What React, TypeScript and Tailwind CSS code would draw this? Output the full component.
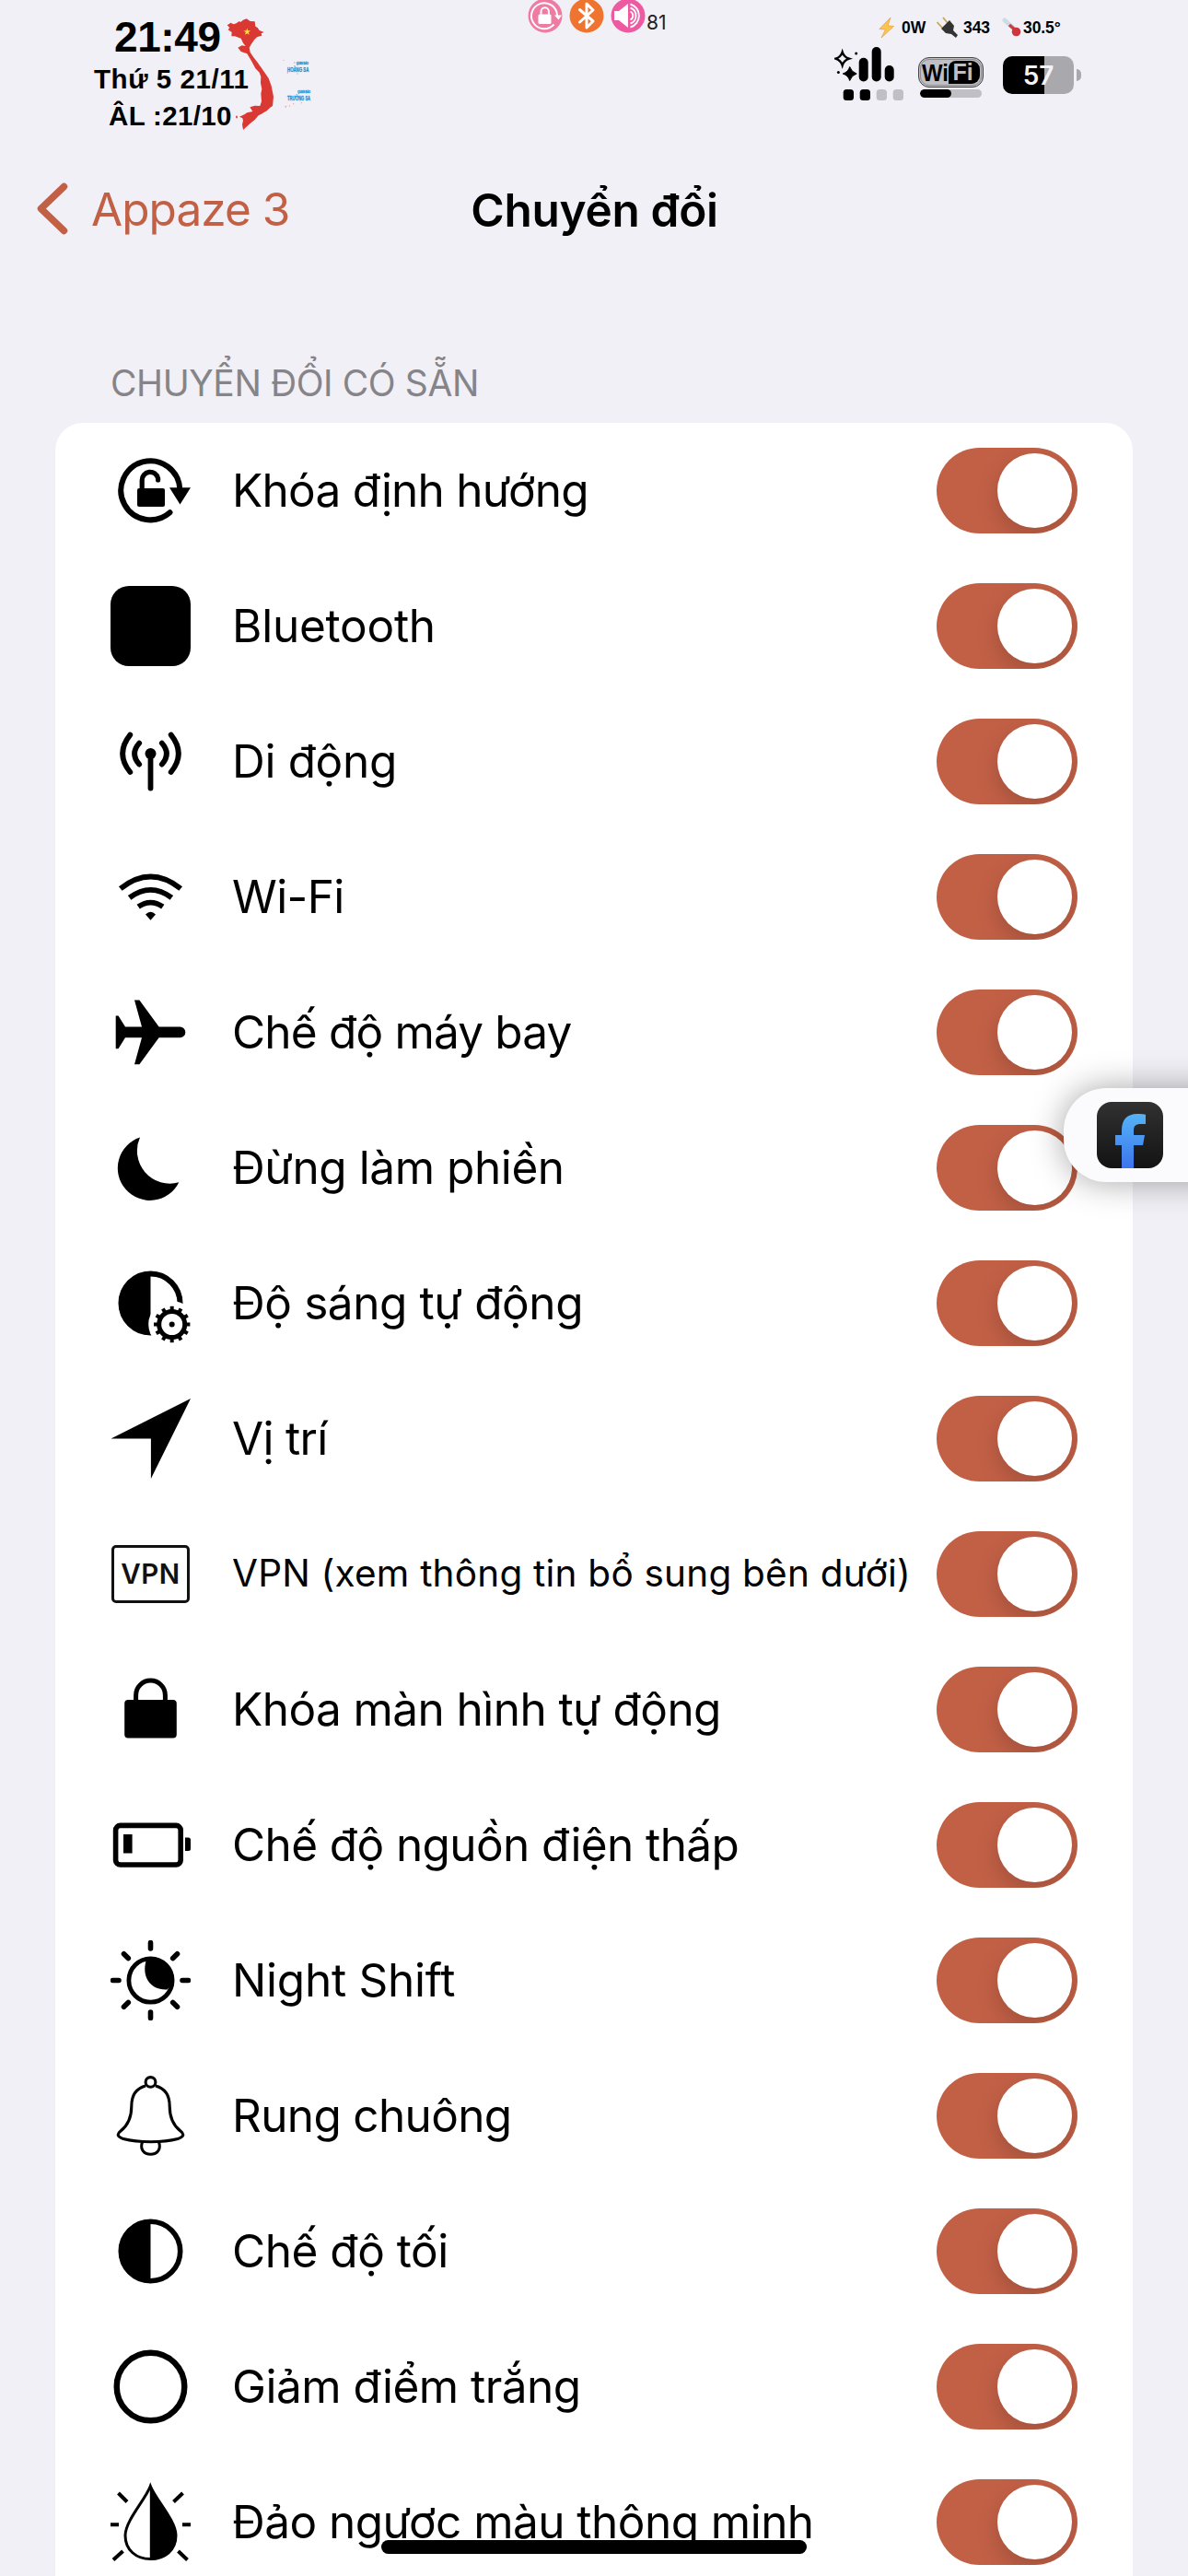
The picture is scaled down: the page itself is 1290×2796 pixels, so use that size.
import type { ReactNode } from 'react';

function Glyph({ children }: { children: ReactNode }) {
  return (
    <svg viewBox="0 0 87 87" className="size-[87px] shrink-0" fill="none" stroke="none">
      {children}
    </svg>
  );
}

const gearTeeth = Array.from({ length: 12 }, (_, i) => i * 30);

const icons: Record<string, ReactNode> = {
  rotation: (
    <Glyph>
      <path d="M75.3 42 A32 32 0 1 0 64.5 67.3" stroke="#000" strokeWidth="6" strokeLinecap="round" />
      <path d="M64 40.3H87L75.5 58.5Z" fill="#000" />
      <rect x="29" y="41" width="30" height="20" rx="2" fill="#000" />
      <path d="M34.2 43V32.5a8.8 8.8 0 0 1 17.4 -2.2V32" stroke="#000" strokeWidth="5.2" strokeLinecap="round" />
    </Glyph>
  ),
  bluetooth: <div className="size-[87px] shrink-0 rounded-[20px] bg-black" />,
  cellular: (
    <Glyph>
      <circle cx="43.5" cy="35" r="6" fill="#000" />
      <g stroke="#000" strokeWidth="5.8" strokeLinecap="round">
        <path d="M43.5 36V72.5" />
        <path d="M31.2 23.6Q21 35 31.2 46.6M55.8 23.6Q66 35 55.8 46.6" />
        <path d="M21.3 14.6Q5 35 21.3 55M65.7 14.6Q82 35 65.7 55" />
      </g>
    </Glyph>
  ),
  wifi: (
    <Glyph>
      <g stroke="#000" strokeWidth="5.8">
        <path d="M10.8 34.6Q43.5 8.6 76.2 34.6" />
        <path d="M20.6 44.4Q43.5 27.4 66.4 44.4" />
        <path d="M30.2 54.2Q43.5 45 56.8 54.2" />
      </g>
      <path d="M38 62.5Q43.5 57 49 62.5L43.5 68.8Z" fill="#000" />
    </Glyph>
  ),
  plane: (
    <Glyph>
      <path
        d="M26 8.6H31.4L52.6 37.6H75.5A5.8 5.8 0 0 1 75.5 49.3H52.6L31.4 78.3H26L34 49.3H16L8.5 61.3H5.7V25.6H8.5L16 37.6H34Z"
        fill="#000"
      />
    </Glyph>
  ),
  moon: (
    <Glyph>
      <path d="M32 10.6A35 35 0 1 0 74.3 59.2A35.5 35.5 0 0 1 32 10.6Z" fill="#000" />
    </Glyph>
  ),
  brightness: (
    <Glyph>
      <circle cx="43.5" cy="43.5" r="32" stroke="#000" strokeWidth="6" />
      <path d="M43.5 9A34.5 34.5 0 0 0 43.5 78Z" fill="#000" />
      <circle cx="66.7" cy="66.5" r="25.5" fill="#fff" />
      <circle cx="66.7" cy="66.5" r="14" stroke="#000" strokeWidth="5" />
      <circle cx="66.7" cy="66.5" r="3" fill="#000" />
      {gearTeeth.map((a) => (
        <rect key={a} x="64.7" y="46.8" width="4" height="5" fill="#000" transform={`rotate(${a} 66.7 66.5)`} />
      ))}
    </Glyph>
  ),
  location: (
    <Glyph>
      <path d="M87 0L43.9 87V43.6H0.5Z" fill="#000" />
    </Glyph>
  ),
  vpn: (
    <div className="flex h-[87px] w-[87px] shrink-0 items-center pl-px">
      <div className="flex h-[63px] w-[85px] items-center justify-center rounded-[5px] border-[3.5px] border-[#111] text-[29.5px] font-semibold leading-none tracking-[0.6px] text-[#111]">
        VPN
      </div>
    </div>
  ),
  lock: (
    <Glyph>
      <rect x="15.2" y="33" width="56.6" height="41.5" rx="4" fill="#000" />
      <path d="M27.6 36V28a15.9 15.9 0 0 1 31.8 0V36" stroke="#000" strokeWidth="5" />
    </Glyph>
  ),
  battery: (
    <Glyph>
      <rect x="5.6" y="22.4" width="70.6" height="42.6" rx="5" stroke="#000" strokeWidth="5.6" />
      <rect x="14" y="32" width="9.6" height="20.5" fill="#000" />
      <path d="M81 35.5H84.5Q87 35.5 87 38V47.5Q87 50 84.5 50H81Z" fill="#000" />
    </Glyph>
  ),
  night: (
    <Glyph>
      <circle cx="43.5" cy="43.5" r="23.6" stroke="#000" strokeWidth="4.8" />
      <path d="M39 21C33 39 43 54.5 61.5 53.5L66 49L68 40L60 26L50 20Z" fill="#000" />
      <g stroke="#000" strokeWidth="5.6" strokeLinecap="round">
        <path d="M43.5 2.5V9M43.5 78V84.5M2.5 43.5H9M78 43.5H84.5" />
        <path d="M14.5 14.8L19.3 19.6M72.5 14.8L67.7 19.6M14.5 72.2L19.3 67.4M72.5 72.2L67.7 67.4" />
      </g>
    </Glyph>
  ),
  bell: (
    <Glyph>
      <g stroke="#000" strokeWidth="3.1">
        <ellipse cx="43.5" cy="6.9" rx="5.4" ry="5.3" />
        <path d="M38 11C27 14 22.8 22 22.8 33C22.8 47 17.5 55 11 60C5.5 64.5 9 66.8 14 68.6C30 72.8 57 72.8 73 68.6C78 66.8 81.5 64.5 76 60C69.5 55 64.2 47 64.2 33C64.2 22 60 14 49 11" />
        <path d="M34.6 71.7C31.5 80 36.5 85.3 43.5 85.3C50.5 85.3 55.5 80 52.4 71.7" />
      </g>
    </Glyph>
  ),
  dark: (
    <Glyph>
      <circle cx="43.5" cy="43.5" r="32.2" stroke="#000" strokeWidth="5.6" />
      <path d="M43.5 9A34.5 34.5 0 0 0 43.5 78Z" fill="#000" />
    </Glyph>
  ),
  ring: (
    <Glyph>
      <circle cx="43.5" cy="43.5" r="36.8" stroke="#000" strokeWidth="6.4" />
    </Glyph>
  ),
  drop: (
    <Glyph>
      <path
        d="M43.3 4.5C38 19 16 42 16 58C16 74 28 83.5 43.3 83.5C59 83.5 71 74 71 58C71 42 49 19 43.3 4.5Z"
        stroke="#000"
        strokeWidth="3"
      />
      <path d="M42.8 3.5L46 10C55 27 72 45 72 58C72 74 60 84.5 42.8 84.5Z" fill="#000" />
      <path
        d="M8.5 12L18 21.5M78.5 12L68.5 21.5M0 46.3H9M78 46.3H87M13.5 75L3 84.5M73.5 75L83.5 84.5"
        stroke="#000"
        strokeWidth="4"
      />
    </Glyph>
  ),
};

const normal = 'text-[49.5px]';

const rows = [
  { icon: 'rotation', label: 'Khóa định hướng', cls: 'tracking-[-0.75px]', size: normal },
  { icon: 'bluetooth', label: 'Bluetooth', cls: 'tracking-[-0.24px]', size: normal },
  { icon: 'cellular', label: 'Di động', cls: 'tracking-[-0.33px]', size: normal },
  { icon: 'wifi', label: 'Wi-Fi', cls: 'tracking-[-0.6px]', size: normal },
  { icon: 'plane', label: 'Chế độ máy bay', cls: 'tracking-[-0.82px]', size: normal },
  { icon: 'moon', label: 'Đừng làm phiền', cls: 'tracking-[-0.43px]', size: normal },
  { icon: 'brightness', label: 'Độ sáng tự động', cls: 'tracking-[-0.4px]', size: normal },
  { icon: 'location', label: 'Vị trí', cls: 'tracking-[-0.66px]', size: normal },
  { icon: 'vpn', label: 'VPN (xem thông tin bổ sung bên dưới)', cls: 'tracking-[0.22px]', size: 'text-[40.5px]' },
  { icon: 'lock', label: 'Khóa màn hình tự động', cls: 'tracking-[-0.57px]', size: normal },
  { icon: 'battery', label: 'Chế độ nguồn điện thấp', cls: 'tracking-[-0.6px]', size: normal },
  { icon: 'night', label: 'Night Shift', cls: 'tracking-[-0.25px]', size: normal },
  { icon: 'bell', label: 'Rung chuông', cls: 'tracking-[-0.66px]', size: normal },
  { icon: 'dark', label: 'Chế độ tối', cls: 'tracking-[-0.47px]', size: normal },
  { icon: 'ring', label: 'Giảm điểm trắng', cls: 'tracking-[-0.51px]', size: normal },
  { icon: 'drop', label: 'Đảo ngược màu thông minh', cls: 'tracking-[-0.53px]', size: normal },
];

function Toggle() {
  return (
    <div className="ml-auto flex h-[93px] w-[153px] shrink-0 items-center justify-end overflow-hidden rounded-full bg-[#c26046] pr-[6px]">
      <div className="size-[81px] rounded-full bg-white shadow-[0_9px_24px_rgba(0,0,0,0.17)]" />
    </div>
  );
}

function VietnamMap() {
  return (
    <svg viewBox="498 0 330 450" className="h-[150px] w-[110px] shrink-0 overflow-visible">
      <path
        fill="#da3832"
        d="M500 82L512 74L520 79L530 76L538 70L545 71L552 65L563 61L575 69L590 70L592 86L599 90L605 99L620 105L611 109L613 116L598 120L588 130L578 145L572 155L575 170L585 185L600 205L618 230L635 255L644 280L651 315L648 345L640 350L630 360L610 372L602 376L590 390L575 402L552 423L549 405L552 393L550 385L540 380L556 373L565 367L583 363L574 349L590 344L607 345L612 330L610 305L613 290L609 270L610 250L605 236L592 223L580 200L565 175L545 168L535 155L548 148L560 150L552 140L545 125L525 118L514 118L515 105L503 97L508 90Z"
      />
      <path d="M528 377l5 0l1 8l-5 0Z" fill="#da3832" />
      <path d="M565 92l2.8 8l8.7 0l-7 5.2l2.6 8.4l-7.1-5l-7.1 5l2.6-8.4l-7-5.2l8.7 0Z" fill="#ffe234" />
      <g fill="#e8a0a0">
        <circle cx="684" cy="196" r="1.8" />
        <circle cx="719" cy="204" r="2.5" />
        <circle cx="697" cy="237" r="2.5" />
        <circle cx="729" cy="240" r="2" />
        <circle cx="691" cy="347" r="2.5" />
        <circle cx="703" cy="345" r="2" />
        <circle cx="716" cy="338" r="2" />
        <circle cx="742" cy="335" r="2" />
      </g>
      <g fill="#1e8ccb" stroke="#1e8ccb" strokeWidth="0.8" fontFamily="Liberation Sans" fontWeight="700">
        <text x="725" y="209" fontSize="10" textLength="40" lengthAdjust="spacingAndGlyphs">QUẦN ĐẢO</text>
        <text x="696" y="234" fontSize="20" textLength="70" lengthAdjust="spacingAndGlyphs">HOÀNG SA</text>
        <text x="730" y="304" fontSize="10" textLength="41" lengthAdjust="spacingAndGlyphs">QUẦN ĐẢO</text>
        <text x="696" y="328" fontSize="20" textLength="75" lengthAdjust="spacingAndGlyphs">TRƯỜNG SA</text>
      </g>
    </svg>
  );
}

function CenterIndicators() {
  return (
    <div className="flex h-[36px]">
      <svg viewBox="0 0 38 38" className="-mt-[2px] h-[38px] w-[38px]" fill="none">
        <circle cx="19" cy="19" r="18.5" fill="#ef7ba3" />
        <path d="M32 19A14 14 0 1 0 28.5 28.5" stroke="#fff" strokeWidth="2" />
        <path d="M29 18.5h8l-3.5 5Z" fill="#fff" />
        <rect x="11.5" y="17.5" width="14" height="10.5" rx="1.5" fill="#fff" />
        <path d="M14.5 18V14.5a4.2 4.2 0 0 1 8.4 0V18" stroke="#fff" strokeWidth="2" />
      </svg>
      <svg viewBox="0 0 38 38" className="-mt-[2px] ml-[7px] h-[38px] w-[38px]" fill="none">
        <circle cx="19" cy="19" r="18.5" fill="#ee742f" />
        <path d="M11.5 12.5L26 25L19 32V6L26 13L11.5 26" stroke="#fff" strokeWidth="3" strokeLinecap="round" strokeLinejoin="round" />
      </svg>
      <svg viewBox="0 0 38 38" className="-mt-[2px] ml-[7px] h-[38px] w-[38px]" fill="none">
        <circle cx="19" cy="19" r="18.5" fill="#ee5aa2" />
        <path d="M4 14H9L19 6V32L9 24H4Z" fill="#fff" />
        <path d="M21.5 14.5a5 5 0 0 1 0 9M21.5 10.5a9 9 0 0 1 0 17M21.5 6.5a13 13 0 0 1 0 25" stroke="#fff" strokeWidth="1.9" />
      </svg>
      <span className="pl-px pt-[12px] text-[21px] leading-[25px] text-[#222]">81</span>
    </div>
  );
}

function PowerReadout() {
  return (
    <div className="flex h-[24px] items-center font-['Liberation_Sans'] text-[17.5px] font-bold leading-[24px] tracking-[-0.1px]">
      <svg viewBox="0 0 17 23" className="h-[23px] w-[17px]">
        <path d="M13 0L1 12.5L7.5 13L3 22L16.5 9.5L10 9Z" fill="#fcc550" stroke="#e9a23c" strokeWidth="0.8" />
      </svg>
      <span className="ml-[8px] w-[28px]">0W</span>
      <svg viewBox="0 0 24 24" className="ml-[10px] h-[24px] w-[24px]" fill="none">
        <path d="M0.5 6L6 12M7 1L12 7" stroke="#c9a550" strokeWidth="1.8" />
        <path d="M5 13L14 4L19 10L18 15L23 20L21 23L16 19L10 18Z" fill="#333" />
      </svg>
      <span className="ml-[5px] w-[31px]">343</span>
      <svg viewBox="0 0 21 22" className="ml-[11px] h-[22px] w-[21px]" fill="none">
        <path d="M3 3L15 14" stroke="#cfdbe3" strokeWidth="5" strokeLinecap="round" />
        <path d="M8 8L15 14" stroke="#c83e45" strokeWidth="3.5" />
        <circle cx="15.5" cy="15.5" r="4.8" fill="#d0353d" />
      </svg>
      <span className="ml-[2px]">30.5°</span>
    </div>
  );
}

function SignalGlyph() {
  return (
    <svg viewBox="0 0 76 60" className="h-[60px] w-[76px]">
      <path d="M8.7 6.5Q10.4 12 16 13.7Q10.4 15.5 8.7 21Q7 15.5 1.4 13.7Q7 12 8.7 6.5Z" fill="none" stroke="#000" strokeWidth="2.4" />
      <path d="M16.7 22.5Q18.5 28.2 24.2 30Q18.5 31.8 16.7 37.5Q15 31.8 9.2 30Q15 28.2 16.7 22.5Z" stroke="#000" strokeWidth="1" />
      <circle cx="23.7" cy="8" r="1.5" />
      <circle cx="4.4" cy="28.5" r="1.5" />
      <rect x="26.7" y="12.7" width="10" height="25.8" rx="5" />
      <rect x="40.7" y="1" width="10" height="37.5" rx="5" />
      <rect x="54.7" y="21" width="10" height="17.5" rx="5" />
      <rect x="9.7" y="47" width="11.3" height="12" rx="3.5" />
      <rect x="27.7" y="47" width="11.3" height="12" rx="3.5" />
      <rect x="45.7" y="47" width="11.3" height="12" rx="3.5" fill="#c0bfc5" />
      <rect x="63.7" y="47" width="11.3" height="12" rx="3.5" fill="#c0bfc5" />
    </svg>
  );
}

function WifiBadge() {
  return (
    <div className="ml-[15px] mt-[12px] flex w-[70px] flex-col">
      <div className="flex h-[33px] w-[71px] items-center rounded-[12px] border-[1.5px] border-[#444] bg-[#c0bfc5] pl-[3px] font-['Liberation_Sans'] text-[25px] font-bold leading-none outline-1 -outline-offset-3 outline-[#8d8c91]">
        <span className="w-[29px] origin-left scale-x-[0.92] text-[26px] text-black">Wi</span>
        <span className="flex h-[25px] w-[34px] items-center justify-center rounded-r-[9px] rounded-tl-[8px] bg-black pr-[3px] text-[#c0bfc5]">Fi</span>
      </div>
      <div className="ml-[2px] mt-[2px] h-[9px] w-[67px] overflow-hidden rounded-full bg-[#c0bfc5]">
        <div className="h-full w-[34px] rounded-full bg-black" />
      </div>
    </div>
  );
}

function StatusBattery() {
  return (
    <div className="ml-[22px] mt-[11px] flex h-[41px] items-center">
      <div className="flex h-[41px] w-[77px] items-center justify-center rounded-[10px] bg-[linear-gradient(to_right,#000_58%,#a9a8ad_58%)] text-[28px] font-semibold leading-none text-[#f3f2f7]">
        57
      </div>
      <div className="ml-[3px] h-[13px] w-[5px] rounded-r-full bg-[#a9a8ad]" />
    </div>
  );
}

export default function App() {
  return (
    <div className="relative flex h-[2796px] w-[1290px] flex-col overflow-hidden bg-[#f1f0f6] font-['Inter',sans-serif] text-black">
      <header className="flex h-[160px] shrink-0 items-start">
        <div className="flex w-[573px] pl-[102px]">
          <div className="flex w-[144px] shrink-0 flex-col whitespace-nowrap pt-[18px] font-['Liberation_Sans'] font-bold">
            <span className="ml-[22px] text-[46px] leading-[45px] tracking-[-0.4px]">21:49</span>
            <span className="mt-[8px] text-[29.5px] leading-[30px] tracking-[0.55px]">Thứ 5 21/11</span>
            <span className="ml-[16px] mt-[10px] text-[29.5px] leading-[30px] tracking-[0.35px]">ÂL :21/10</span>
          </div>
          <VietnamMap />
        </div>
        <CenterIndicators />
        <div className="ml-auto flex w-[384px] flex-col pt-[18px]">
          <div className="pl-[48px]">
            <PowerReadout />
          </div>
          <div className="mt-[8px] flex items-start">
            <SignalGlyph />
            <WifiBadge />
            <StatusBattery />
          </div>
        </div>
      </header>

      <nav className="grid h-[136px] shrink-0 grid-cols-3 items-center">
        <div className="flex items-center pl-[38px] text-[#c26046]">
          <svg viewBox="0 0 38 60" className="h-[60px] w-[38px]" fill="none">
            <path d="M31.5 4.5L6.5 28.5L31.5 52.5" stroke="currentColor" strokeWidth="7.5" strokeLinecap="round" strokeLinejoin="round" />
          </svg>
          <span className="-mt-[2px] ml-[23px] whitespace-nowrap text-[49.5px] leading-[60px] tracking-[-0.94px]">Appaze 3</span>
        </div>
        <h1 className="-mt-px whitespace-nowrap pl-px text-center text-[49.5px] font-semibold leading-[60px] tracking-[-0.28px]">Chuyển đổi</h1>
      </nav>

      <h2 className="mt-[97px] h-[66px] shrink-0 pl-[120px] text-[39px] leading-[46px] tracking-[-0.4px] text-[#858489]">
        CHUYỂN ĐỔI CÓ SẴN
      </h2>

      <main className="mx-[60px] shrink-0 rounded-t-[30px] bg-white">
        {rows.map((r) => (
          <div key={r.label} className="flex h-[147px] items-center px-[60px]">
            {icons[r.icon]}
            <span className={`ml-[45px] whitespace-nowrap ${r.size} ${r.cls}`}>{r.label}</span>
            <Toggle />
          </div>
        ))}
      </main>

      <div className="absolute left-[1155px] top-[1181px] flex h-[102px] w-[180px] items-center rounded-l-[46px] bg-[#fbfafd] pl-[36px] shadow-[0_0_36px_rgba(0,0,0,0.36)]">
        <svg viewBox="0 0 72 72" className="size-[72px]">
          <defs>
            <linearGradient id="tile" x1="0" y1="0" x2="0" y2="1">
              <stop offset="0" stopColor="#313131" />
              <stop offset="1" stopColor="#131313" />
            </linearGradient>
            <linearGradient id="mark" x1="0" y1="0" x2="0" y2="1">
              <stop offset="0" stopColor="#55b3f5" />
              <stop offset="1" stopColor="#3c74ee" />
            </linearGradient>
          </defs>
          <rect width="72" height="72" rx="16" fill="url(#tile)" />
          <path d="M27 72V47H20V36H27V31C27 19 33 13 44 13C48 13 51 13.3 53 13.7V24H48C42 24 40 26.5 40 31V36H52L50 47H40V72Z" fill="url(#mark)" />
        </svg>
      </div>

      <div className="absolute left-[414px] top-[2757px] h-[15px] w-[462px] rounded-full bg-black" />
    </div>
  );
}
